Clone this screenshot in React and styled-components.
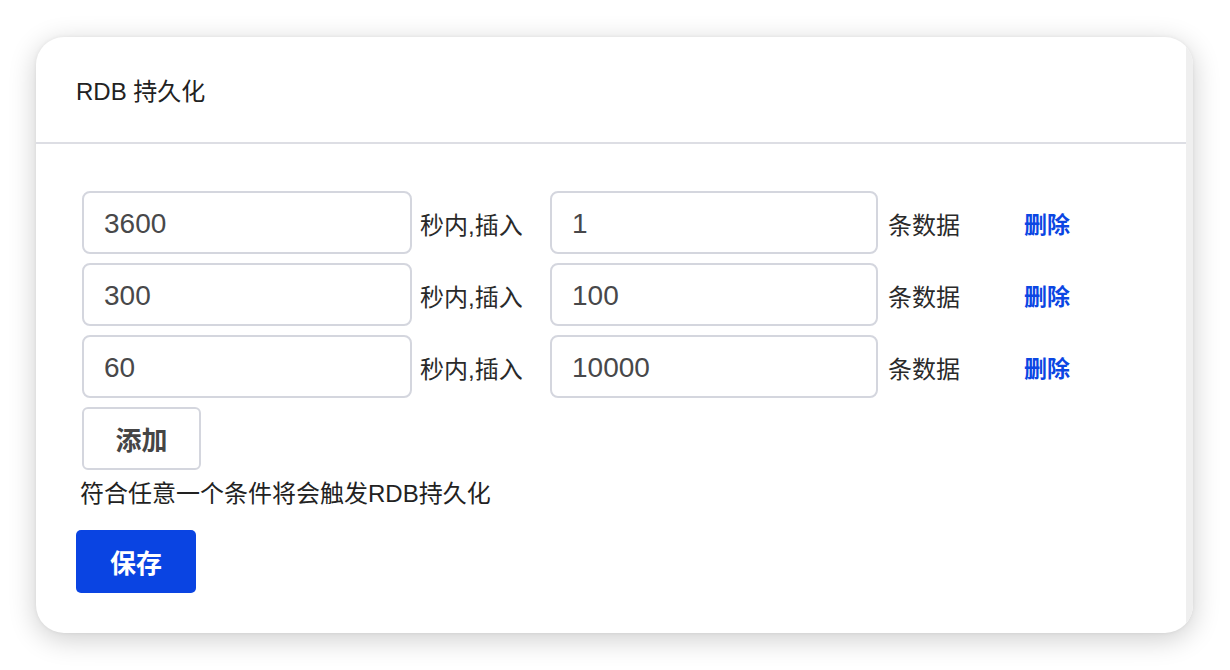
import React, { useState } from "react";
import styled, { createGlobalStyle } from "styled-components";

const GlobalStyle = createGlobalStyle`
  html, body {
    margin: 0;
    padding: 0;
    background: #ffffff;
    font-family: "Liberation Sans", "Noto Sans CJK SC", sans-serif;
  }
  * { box-sizing: border-box; }
`;

const Page = styled.div`
  width: 1230px;
  height: 670px;
  padding: 37px 0 0 36px;
  background: #ffffff;
  overflow: hidden;
`;

const Card = styled.div`
  width: 1157px;
  height: 596px;
  border-radius: 28px;
  background: #ffffff;
  box-shadow: 0 6px 28px rgba(0, 0, 0, 0.2), 0 0 4px rgba(0, 0, 0, 0.06);
  overflow: hidden;
  display: flex;
`;

const Main = styled.div`
  flex: 1;
  display: flex;
  flex-direction: column;
`;

const Strip = styled.div`
  width: 7px;
  background: #efefef;
`;

const Header = styled.div`
  height: 107px;
  padding-left: 40px;
  padding-bottom: 1px;
  display: flex;
  align-items: center;
  border-bottom: 2px solid #dddee4;
  font-size: 24px;
  color: #222222;
`;

const Body = styled.div`
  padding: 47px 0 0 40px;
  display: flex;
  flex-direction: column;
`;

const Rows = styled.div`
  display: flex;
  flex-direction: column;
  gap: 9px;
  margin-left: 6px;
`;

const Row = styled.div`
  display: flex;
  align-items: center;
  height: 63px;
`;

const Input = styled.input`
  width: ${(p) => p.$w}px;
  height: 63px;
  border: 2px solid #d4d6de;
  border-radius: 8px;
  padding: 3px 0 0 20px;
  font-family: "Liberation Sans", sans-serif;
  font-size: 28px;
  color: #48484a;
  background: #ffffff;
  outline: none;
`;

const Label = styled.span`
  width: ${(p) => p.$w}px;
  margin-left: ${(p) => p.$ml}px;
  font-size: 24px;
  color: #2a2a2a;
  padding-top: 1px;
`;

const DeleteLink = styled.a`
  font-size: 23px;
  font-weight: 700;
  color: #0b46e3;
  cursor: pointer;
`;

const AddButton = styled.button`
  width: 119px;
  height: 63px;
  border: 2px solid #d4d6de;
  border-radius: 6px;
  background: #ffffff;
  font-family: "Liberation Sans", "Noto Sans CJK SC", sans-serif;
  font-size: 26px;
  font-weight: 700;
  color: #454545;
  cursor: pointer;
  padding: 0;
`;

const Hint = styled.div`
  margin: 7px 0 0 4px;
  font-size: 24px;
  line-height: 34px;
  color: #222222;
`;

const SaveButton = styled.button`
  margin-top: 19px;
  width: 120px;
  height: 63px;
  border: none;
  border-radius: 5px;
  background: #0a44e2;
  color: #ffffff;
  font-family: "Liberation Sans", "Noto Sans CJK SC", sans-serif;
  font-size: 26px;
  font-weight: 700;
  cursor: pointer;
  padding: 0;
`;

export default function App() {
  const [rows] = useState([
    { sec: "3600", count: "1" },
    { sec: "300", count: "100" },
    { sec: "60", count: "10000" },
  ]);
  return (
    <>
      <GlobalStyle />
      <Page>
        <Card>
          <Main>
            <Header>RDB 持久化</Header>
            <Body>
              <Rows>
                {rows.map((r, i) => (
                  <Row key={i}>
                    <Input $w={330} defaultValue={r.sec} />
                    <Label $w={130} $ml={8}>秒内,插入</Label>
                    <Input $w={328} defaultValue={r.count} />
                    <Label $w={136} $ml={10}>条数据</Label>
                    <DeleteLink>删除</DeleteLink>
                  </Row>
                ))}
                <Row>
                  <AddButton>添加</AddButton>
                </Row>
              </Rows>
              <Hint>符合任意一个条件将会触发RDB持久化</Hint>
              <div>
                <SaveButton>保存</SaveButton>
              </div>
            </Body>
          </Main>
          <Strip />
        </Card>
      </Page>
    </>
  );
}
